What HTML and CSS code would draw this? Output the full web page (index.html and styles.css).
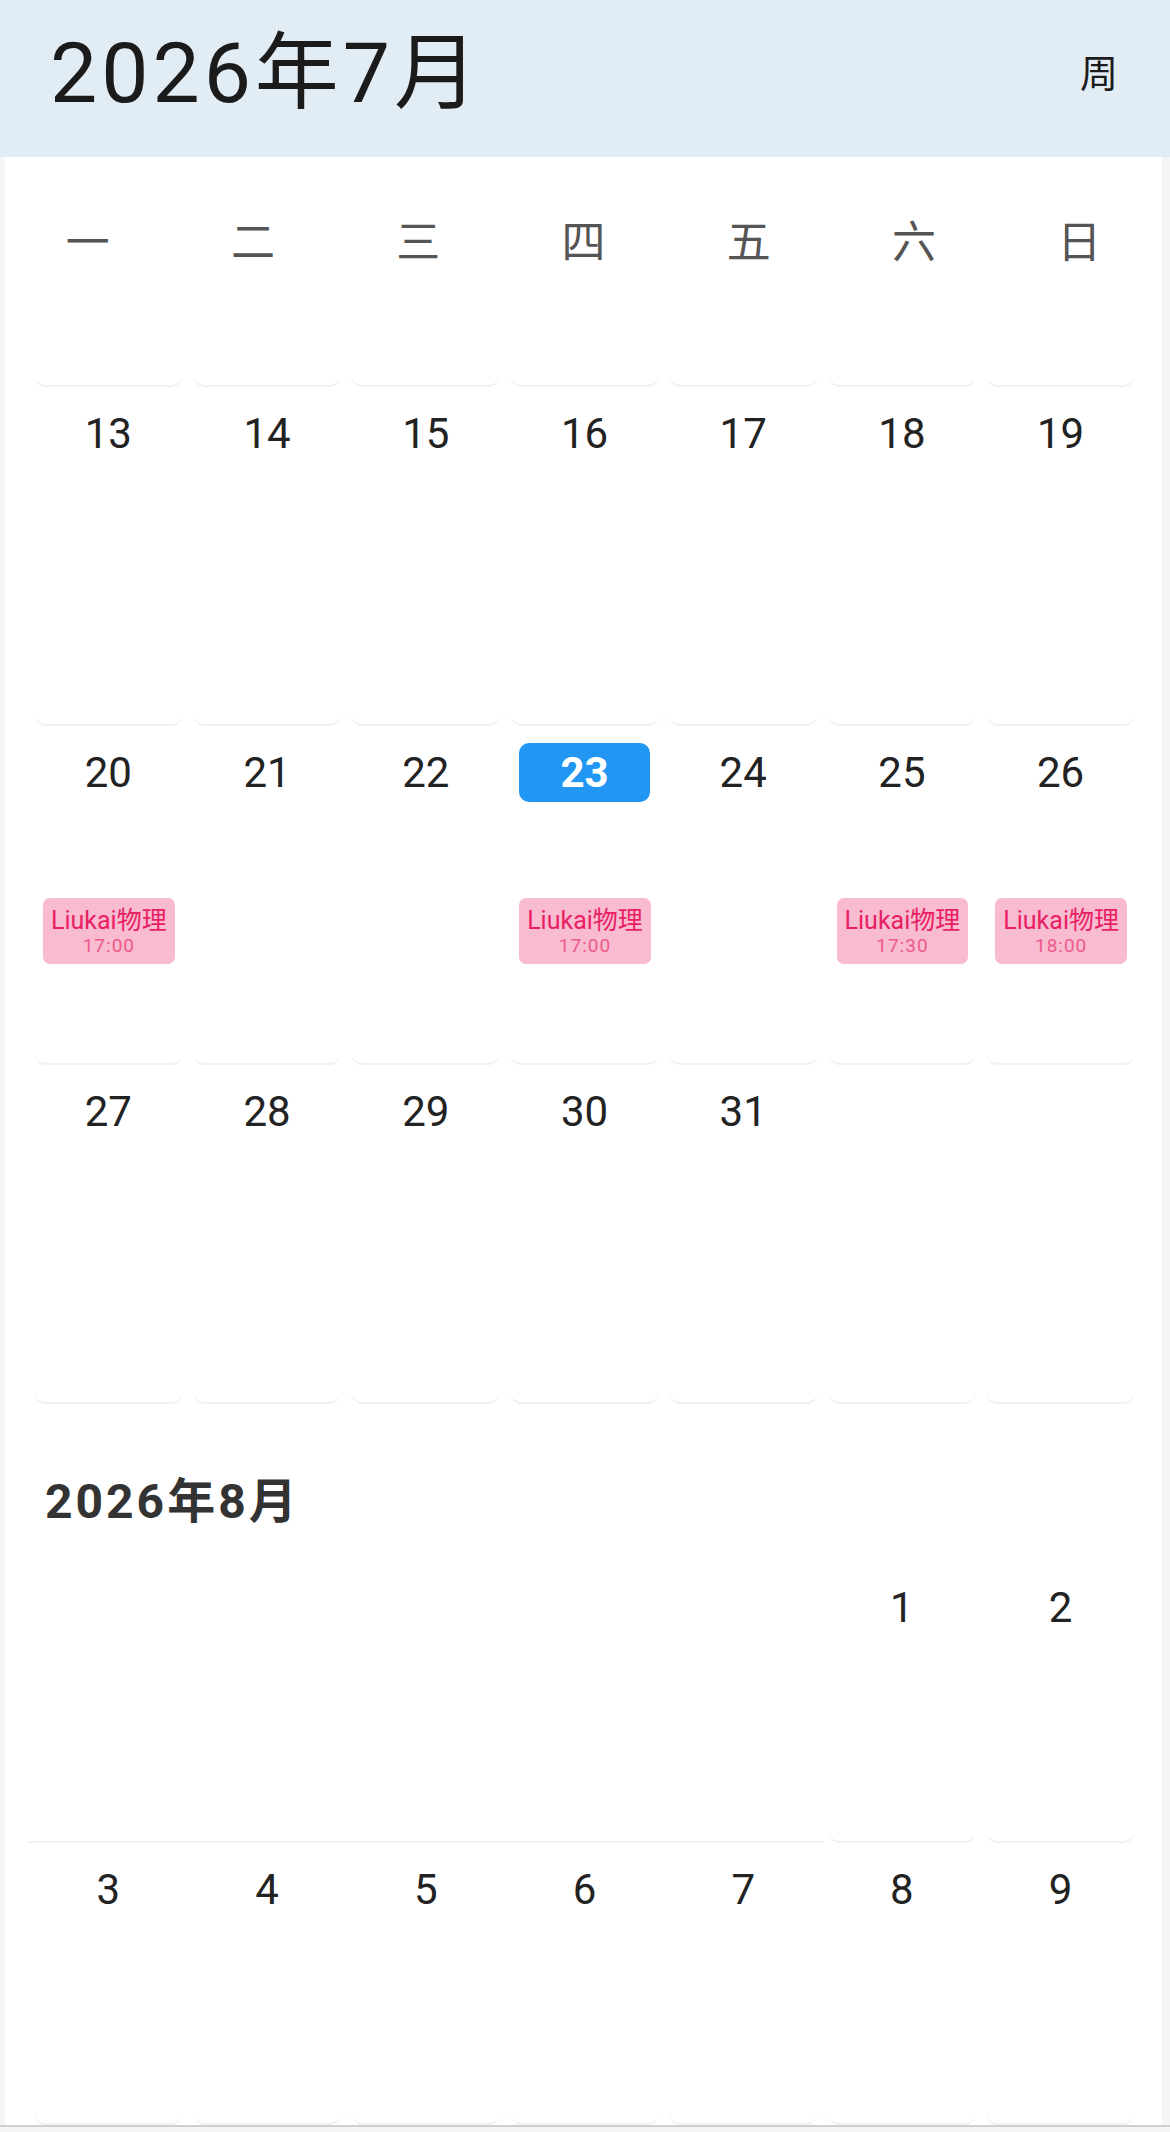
FILE: index.html
```html
<!DOCTYPE html>
<html lang="zh-CN">
<head>
<meta charset="utf-8">
<title>2026年7月</title>
<link rel="stylesheet" href="styles.css">
</head>
<body>
<header class="topbar">
  <h1 class="topbar-title">2026年7月</h1>
  <span class="topbar-mode">周</span>
</header>

<main class="panel">
  <div class="weekdays">
    <span>一</span><span>二</span><span>三</span><span>四</span><span>五</span><span>六</span><span>日</span>
  </div>

  <div class="grid">
    <div class="row stub">
      <div class="cell"></div><div class="cell"></div><div class="cell"></div><div class="cell"></div><div class="cell"></div><div class="cell"></div><div class="cell"></div>
    </div>

    <div class="row tall">
      <div class="cell"><div class="date">13</div></div>
      <div class="cell"><div class="date">14</div></div>
      <div class="cell"><div class="date">15</div></div>
      <div class="cell"><div class="date">16</div></div>
      <div class="cell"><div class="date">17</div></div>
      <div class="cell"><div class="date">18</div></div>
      <div class="cell"><div class="date">19</div></div>
    </div>

    <div class="row tall">
      <div class="cell"><div class="date">20</div><div class="event"><span class="event-name">Liukai物理</span><span class="event-time">17:00</span></div></div>
      <div class="cell"><div class="date">21</div></div>
      <div class="cell"><div class="date">22</div></div>
      <div class="cell"><div class="date today">23</div><div class="event"><span class="event-name">Liukai物理</span><span class="event-time">17:00</span></div></div>
      <div class="cell"><div class="date">24</div></div>
      <div class="cell"><div class="date">25</div><div class="event"><span class="event-name">Liukai物理</span><span class="event-time">17:30</span></div></div>
      <div class="cell"><div class="date">26</div><div class="event"><span class="event-name">Liukai物理</span><span class="event-time">18:00</span></div></div>
    </div>

    <div class="row tall">
      <div class="cell"><div class="date">27</div></div>
      <div class="cell"><div class="date">28</div></div>
      <div class="cell"><div class="date">29</div></div>
      <div class="cell"><div class="date">30</div></div>
      <div class="cell"><div class="date">31</div></div>
      <div class="cell"></div>
      <div class="cell"></div>
    </div>
  </div>

  <h2 class="month-heading">2026年8月</h2>

  <div class="grid">
    <div class="row short">
      <div class="cell flat"></div>
      <div class="cell flat"></div>
      <div class="cell flat"></div>
      <div class="cell flat"></div>
      <div class="cell flat"></div>
      <div class="cell"><div class="date">1</div></div>
      <div class="cell"><div class="date">2</div></div>
    </div>
    <div class="row short">
      <div class="cell"><div class="date">3</div></div>
      <div class="cell"><div class="date">4</div></div>
      <div class="cell"><div class="date">5</div></div>
      <div class="cell"><div class="date">6</div></div>
      <div class="cell"><div class="date">7</div></div>
      <div class="cell"><div class="date">8</div></div>
      <div class="cell"><div class="date">9</div></div>
    </div>
  </div>
</main>
<footer class="bottombar"></footer>
</body>
</html>
```

FILE: styles.css
```css
* {
  box-sizing: border-box;
}

html, body {
  margin: 0;
  padding: 0;
}

body {
  background: #f5f5f6;
  font-family: Roboto, "Noto Sans CJK SC", "Noto Sans", sans-serif;
  color: #222;
  height: 2132px;
  overflow: hidden;
}

.topbar {
  height: 157px;
  background: #e2ecf5;
  display: flex;
  align-items: center;
  justify-content: space-between;
  padding: 0 52px 10px 50px;
}

.topbar-title {
  margin: 0;
  font-size: 84px;
  font-weight: 400;
  line-height: 1;
  letter-spacing: 4px;
  color: #1b1b1b;
}

.topbar-mode {
  font-size: 38px;
  line-height: 1;
  color: #1b1b1b;
}

.panel {
  margin: 0 8px 0 5px;
  background: #ffffff;
}

.weekdays {
  display: grid;
  grid-template-columns: repeat(7, 1fr);
  height: 200px;
  padding-top: 56px;
}

.weekdays span {
  text-align: center;
  font-size: 44px;
  line-height: 60px;
  color: #555;
}

.grid {
  padding: 0 27px 0 29px;
}

.row {
  display: grid;
  grid-template-columns: repeat(7, 1fr);
  column-gap: 10px;
}

.row.stub {
  height: 30px;
}

.row.tall {
  height: 339px;
}

.row.short {
  height: 282px;
}

.cell {
  display: flex;
  flex-direction: column;
  border-bottom: 2px solid #f1f1f2;
  border-radius: 0 0 12px 12px;
}

.cell.flat {
  border-radius: 0;
  margin: 0 -5px;
}

.date {
  margin: 17px 9px 0;
  height: 59px;
  line-height: 59px;
  text-align: center;
  font-size: 42px;
  color: #222;
  border-radius: 10px;
}

.date.today {
  background: #2196f3;
  color: #ffffff;
  font-weight: 700;
}

.event {
  margin: 96px 8px 0 9px;
  height: 66px;
  background: #f8bbd0;
  border-radius: 7px;
  display: flex;
  flex-direction: column;
  align-items: center;
  padding-top: 9px;
}

.event-name {
  font-size: 25px;
  line-height: 28px;
  color: #e91e63;
  white-space: nowrap;
}

.event-time {
  font-size: 19px;
  line-height: 22px;
  color: #ec5a8c;
  letter-spacing: 1px;
}

.month-heading {
  margin: 0;
  padding: 68px 0 29px 40px;
  height: 157px;
  font-size: 48px;
  line-height: 60px;
  font-weight: 700;
  letter-spacing: 3px;
  color: #333;
}

.bottombar {
  border-top: 2px solid #cfcfcf;
  height: 40px;
  background: #f5f5f6;
}
```
